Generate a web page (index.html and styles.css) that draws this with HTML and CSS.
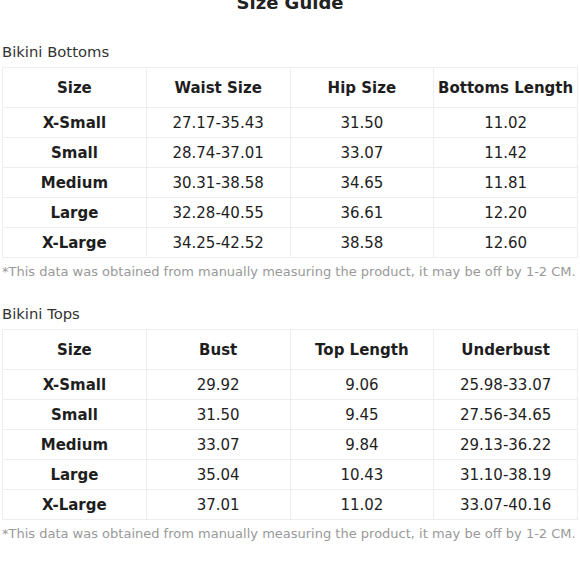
FILE: index.html
```html
<!DOCTYPE html>
<html>
<head>
<meta charset="utf-8">
<link rel="stylesheet" href="styles.css">
</head>
<body>
<div class="page">
  <h1 class="title">Size Guide</h1>

  <section class="section section-first">
    <div class="label">Bikini Bottoms</div>
    <table class="grid">
      <thead>
        <tr><th>Size</th><th>Waist Size</th><th>Hip Size</th><th>Bottoms Length</th></tr>
      </thead>
      <tbody>
        <tr><th>X-Small</th><td>27.17-35.43</td><td>31.50</td><td>11.02</td></tr>
        <tr><th>Small</th><td>28.74-37.01</td><td>33.07</td><td>11.42</td></tr>
        <tr><th>Medium</th><td>30.31-38.58</td><td>34.65</td><td>11.81</td></tr>
        <tr><th>Large</th><td>32.28-40.55</td><td>36.61</td><td>12.20</td></tr>
        <tr><th>X-Large</th><td>34.25-42.52</td><td>38.58</td><td>12.60</td></tr>
      </tbody>
    </table>
    <p class="note">*This data was obtained from manually measuring the product, it may be off by 1-2 CM.</p>
  </section>

  <section class="section">
    <div class="label">Bikini Tops</div>
    <table class="grid">
      <thead>
        <tr><th>Size</th><th>Bust</th><th>Top Length</th><th>Underbust</th></tr>
      </thead>
      <tbody>
        <tr><th>X-Small</th><td>29.92</td><td>9.06</td><td>25.98-33.07</td></tr>
        <tr><th>Small</th><td>31.50</td><td>9.45</td><td>27.56-34.65</td></tr>
        <tr><th>Medium</th><td>33.07</td><td>9.84</td><td>29.13-36.22</td></tr>
        <tr><th>Large</th><td>35.04</td><td>10.43</td><td>31.10-38.19</td></tr>
        <tr><th>X-Large</th><td>37.01</td><td>11.02</td><td>33.07-40.16</td></tr>
      </tbody>
    </table>
    <p class="note">*This data was obtained from manually measuring the product, it may be off by 1-2 CM.</p>
  </section>
</div>
</body>
</html>
```

FILE: styles.css
```css
html, body {
  margin: 0;
  padding: 0;
  background: #ffffff;
}

body {
  font-family: "DejaVu Sans", "Liberation Sans", sans-serif;
  color: #222222;
}

.page {
  padding: 0 2px;
}

.title {
  margin: -8px 0 0 0;
  font-size: 18px;
  font-weight: bold;
  line-height: 21px;
  text-align: center;
  color: #222222;
}

.section {
  margin-top: 25px;
}

.section-first {
  margin-top: 30px;
}

.label {
  font-size: 14.8px;
  line-height: 17px;
  color: #333333;
  margin-bottom: 7px;
}

.grid {
  width: 576px;
  border-collapse: collapse;
  table-layout: fixed;
  border: 1px solid #eeeeee;
}

.grid th,
.grid td {
  border: 1px solid #eeeeee;
  text-align: center;
  padding: 0;
  font-size: 15px;
  color: #1e1e1e;
}

.grid thead th {
  height: 39px;
  font-weight: bold;
}

.grid tbody th,
.grid tbody td {
  height: 29px;
}

.grid tbody th {
  font-weight: bold;
}

.note {
  margin: 6px 0 0 0;
  font-size: 13px;
  line-height: 16px;
  color: #999999;
  white-space: nowrap;
}
```
